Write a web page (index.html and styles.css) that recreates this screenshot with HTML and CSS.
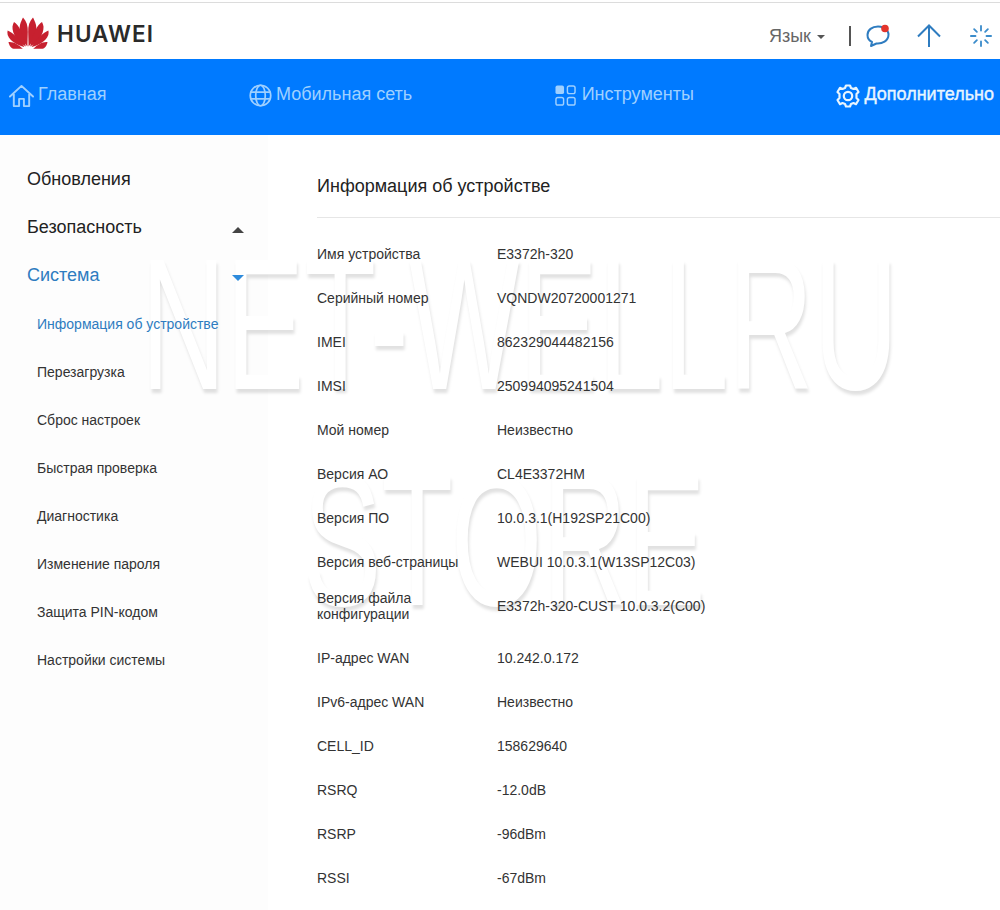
FILE: index.html
```html
<!DOCTYPE html>
<html lang="ru">
<head>
<meta charset="utf-8">
<title>HUAWEI</title>
<link rel="stylesheet" href="styles.css">
</head>
<body>
<header class="topbar">
  <div class="brand">
    <svg class="brand-mark" viewBox="0 0 42 32" aria-hidden="true">
      <g fill="#c7202f" id="petals">
        <path d="M20.400 29.500 C14.500 23 11.500 15 13 8 C13.700 5 15 2.500 16 0.500 C19.500 4 21 9 20.800 15 Z"/>
        <path d="M18.800 29.500 C11 25 5 17 5.500 9.500 C5.700 8 6.300 6.500 7 5 C11.500 8 16 15 18.800 29.500 Z"/>
        <path d="M17.400 30 C10 28 3 24 0.700 18 C0.300 16.500 0.300 15 0.600 13.500 C5.500 15.500 13 22 17.400 30 Z"/>
        <path d="M15.800 31.800 L6.500 31.800 C4 31.500 2 28 1.500 25 C6.500 24.500 11.500 27.500 15.800 31.800 Z"/>
      </g>
      <use href="#petals" transform="matrix(-1 0 0 1 42 0)"/>
    </svg>
    <span class="brand-name">HUAWEI</span>
  </div>
  <div class="tools">
    <span class="lang">Язык<i class="lang-caret"></i></span>
    <span class="divider"></span>
    <svg class="tool-icon chat" viewBox="0 0 24 24" aria-hidden="true">
      <path d="M17 3.500 C16 3 14 2.500 12 2.500 C6 2.500 1.500 6 1.500 11 C1.500 14 3 16.500 6 18 L5 22 L10.500 19.500 C16 20 22.500 17 22.500 10.500 C22.500 9 22 8 21.500 7" fill="none" stroke="#2e7cc0" stroke-width="2" stroke-linecap="round" stroke-linejoin="round"/>
      <circle cx="19" cy="4.500" r="3.800" fill="#e4352c"/>
    </svg>
    <svg class="tool-icon arrow" viewBox="0 0 24 24" aria-hidden="true">
      <path d="M12 23 V2 M1 12.500 L12 1.500 L23 12.500" fill="none" stroke="#2e7cc0" stroke-width="2"/>
    </svg>
    <svg class="tool-icon spinner" viewBox="0 0 24 24" aria-hidden="true">
      <g fill="none" stroke="#3b8ccb" stroke-width="2" stroke-linecap="round">
        <path d="M12 1 V6"/><path d="M12 18 V23"/><path d="M1 12 H6"/><path d="M18 12 H23"/>
        <path d="M4.500 4.500 L7.500 7.500"/><path d="M16.500 16.500 L19.500 19.500"/><path d="M4.500 19.500 L7.500 16.500"/><path d="M16.500 7.500 L19.500 4.500"/>
      </g>
    </svg>
  </div>
</header>

<nav class="mainnav">
  <a class="nav-item">
    <svg class="nav-icon home" viewBox="0 0 26 24" aria-hidden="true">
      <path d="M1 12.500 L13 1.500 L25 12.500 M5 10 V22.500 H10.500 V15 H15.500 V22.500 H21 V10" fill="none" stroke="currentColor" stroke-width="2" stroke-linejoin="round" stroke-linecap="round"/>
    </svg>
    <span>Главная</span>
  </a>
  <a class="nav-item">
    <svg class="nav-icon globe" viewBox="0 0 24 24" aria-hidden="true">
      <g fill="none" stroke="currentColor" stroke-width="1.800">
        <circle cx="12" cy="12" r="10.700"/><ellipse cx="12" cy="12" rx="5" ry="10.700"/><path d="M1.500 8.500 H22.500 M1.500 15.500 H22.500"/>
      </g>
    </svg>
    <span>Мобильная сеть</span>
  </a>
  <a class="nav-item">
    <svg class="nav-icon apps" viewBox="0 0 22 22" aria-hidden="true">
      <rect x="0.500" y="0.500" width="9" height="9" rx="2" fill="currentColor"/>
      <g fill="none" stroke="currentColor" stroke-width="1.500">
        <rect x="13" y="1" width="8" height="8" rx="2"/><rect x="1" y="13" width="8" height="8" rx="2"/><rect x="13" y="13" width="8" height="8" rx="2"/>
      </g>
    </svg>
    <span>Инструменты</span>
  </a>
  <a class="nav-item is-active">
    <svg class="nav-icon gear" viewBox="0 0 24 24" aria-hidden="true">
      <path d="M10 1.500 H14 L15 4 L17.500 5 L20 3.800 L20.200 4 L22.500 8 L20.500 10 V14 L22.500 16 L20 20.200 L17.500 19 L15 20 L14 22.500 H10 L9 20 L6.500 19 L4 20.200 L1.500 16 L3.500 14 V10 L1.500 8 L4 3.800 L6.500 5 L9 4 Z" fill="none" stroke="currentColor" stroke-width="2.200" stroke-linejoin="round"/>
      <circle cx="12" cy="12" r="4.200" fill="none" stroke="currentColor" stroke-width="2.200"/>
    </svg>
    <span>Дополнительно</span>
  </a>
</nav>

<div class="content">
  <aside class="sidebar">
    <ul class="menu">
      <li class="menu-top">Обновления</li>
      <li class="menu-top">Безопасность<i class="tri tri-up"></i></li>
      <li class="menu-top is-open">Система<i class="tri tri-down"></i></li>
      <li class="menu-sub is-current">Информация об устройстве</li>
      <li class="menu-sub">Перезагрузка</li>
      <li class="menu-sub">Сброс настроек</li>
      <li class="menu-sub">Быстрая проверка</li>
      <li class="menu-sub">Диагностика</li>
      <li class="menu-sub">Изменение пароля</li>
      <li class="menu-sub">Защита PIN-кодом</li>
      <li class="menu-sub">Настройки системы</li>
    </ul>
  </aside>
  <main class="panel">
    <h1 class="panel-title">Информация об устройстве</h1>
    <dl class="info">
      <div class="row"><dt>Имя устройства</dt><dd>E3372h-320</dd></div>
      <div class="row"><dt>Серийный номер</dt><dd>VQNDW20720001271</dd></div>
      <div class="row"><dt>IMEI</dt><dd>862329044482156</dd></div>
      <div class="row"><dt>IMSI</dt><dd>250994095241504</dd></div>
      <div class="row"><dt>Мой номер</dt><dd>Неизвестно</dd></div>
      <div class="row"><dt>Версия АО</dt><dd>CL4E3372HM</dd></div>
      <div class="row"><dt>Версия ПО</dt><dd>10.0.3.1(H192SP21C00)</dd></div>
      <div class="row"><dt>Версия веб-страницы</dt><dd>WEBUI 10.0.3.1(W13SP12C03)</dd></div>
      <div class="row row-tall"><dt>Версия файла конфигурации</dt><dd>E3372h-320-CUST 10.0.3.2(C00)</dd></div>
      <div class="row"><dt>IP-адрес WAN</dt><dd>10.242.0.172</dd></div>
      <div class="row"><dt>IPv6-адрес WAN</dt><dd>Неизвестно</dd></div>
      <div class="row"><dt>CELL_ID</dt><dd>158629640</dd></div>
      <div class="row"><dt>RSRQ</dt><dd>-12.0dB</dd></div>
      <div class="row"><dt>RSRP</dt><dd>-96dBm</dd></div>
      <div class="row"><dt>RSSI</dt><dd>-67dBm</dd></div>
    </dl>
  </main>
</div>

<div class="watermark watermark-one">NET-WELLRU</div>
<div class="watermark watermark-two">STORE</div>
</body>
</html>
```

FILE: styles.css
```css
* { box-sizing: border-box; }
html, body { margin: 0; padding: 0; }
body {
  width: 1000px;
  height: 910px;
  overflow: hidden;
  position: relative;
  background: #fff;
  color: #333;
  font-family: "Liberation Sans", Arial, sans-serif;
}
.topbar {
  height: 57px;
  margin-top: 2px;
  border-top: 1px solid #dcdcdc;
  display: flex;
  align-items: center;
  justify-content: space-between;
  padding: 0 8px 0 7px;
}
.brand { display: flex; align-items: center; gap: 8px; margin-top: 4px; }
.brand-mark { width: 42px; height: 32px; display: block; }
.brand-name {
  font-family: "Inter", "Liberation Sans", sans-serif;
  font-size: 22.5px;
  font-weight: 600;
  letter-spacing: 1.1px;
  color: #2a2a2a;
}
.tools { display: flex; align-items: center; margin-top: 10px; }
.lang { color: #666; font-size: 18px; display: flex; align-items: center; }
.lang-caret {
  width: 0; height: 0;
  margin-left: 6px; margin-top: 2px;
  border-left: 4px solid transparent;
  border-right: 4px solid transparent;
  border-top: 4px solid #555;
}
.divider { width: 2px; height: 20px; background: #555; margin: 0 15px 0 24px; }
.tool-icon { width: 24px; height: 24px; display: block; }
.chat { margin-right: 27px; }
.arrow { margin-right: 29px; }
.spinner { width: 22px; height: 22px; }
.mainnav {
  height: 76px;
  background: #007aff;
  display: flex;
  align-items: center;
  justify-content: space-between;
  padding: 0 6px 5px 9px;
  font-size: 18px;
  color: #9fd0ff;
}
.nav-item { display: flex; align-items: center; gap: 4px; }
.nav-item.is-active { color: #e8f5ff; -webkit-text-stroke: 0.4px #e8f5ff; }
.nav-icon { display: block; width: 24px; height: 24px; flex: none; margin-top: 2px; }
.home { width: 25px; }
.globe { width: 23px; height: 23px; }
.apps { width: 21px; height: 21px; margin-right: 2px; }
.content { display: flex; height: 775px; }
.sidebar {
  width: 268px;
  flex: none;
  background: #fdfdfd;
  padding: 20px 0 0 0;
}
.menu { list-style: none; margin: 0; padding: 0; position: relative; z-index: 2; }
.menu-top {
  height: 48px;
  padding-left: 27px;
  padding-right: 24px;
  font-size: 18px;
  color: #222;
  display: flex;
  align-items: center;
  justify-content: space-between;
}
.menu-top.is-open { color: #2e7cc0; }
.menu-sub {
  height: 48px;
  padding-left: 37px;
  font-size: 14px;
  color: #333;
  display: flex;
  align-items: center;
}
.menu-sub.is-current { color: #2e7cc0; margin-top: 1px; }
.tri { width: 0; height: 0; border-left: 6px solid transparent; border-right: 6px solid transparent; margin-top: 6px; }
.tri-up { border-bottom: 6px solid #444; }
.tri-down { border-top: 6px solid #2e8bdc; }
.panel { flex: 1; padding-left: 49px; min-width: 0; }
.panel-title {
  margin: 0;
  height: 83px;
  padding-top: 40px;
  font-size: 18px;
  line-height: 22px;
  font-weight: 400;
  color: #222;
  border-bottom: 1px solid #e6e6e6;
}
.info { margin: 14px 0 0; position: relative; z-index: 2; }
.row { display: flex; align-items: center; height: 44px; font-size: 14px; line-height: 16px; color: #333; }
.row-tall { height: 52px; padding-bottom: 8px; }
.row dt { width: 180px; flex: none; padding-right: 20px; }
.row dd { margin: 0; }
.watermark {
  position: absolute;
  z-index: 1;
  color: #fff;
  font-weight: 400;
  white-space: nowrap;
  line-height: 1;
  transform-origin: 0 0;
  text-shadow: 2px 4px 4px rgba(0, 0, 0, 0.12);
  pointer-events: none;
}
.watermark-one { top: 230px; left: 141px; font-size: 188px; transform: scaleX(0.625); }
.watermark-two { top: 446px; left: 303px; font-size: 188px; transform: scaleX(0.625); }
```
